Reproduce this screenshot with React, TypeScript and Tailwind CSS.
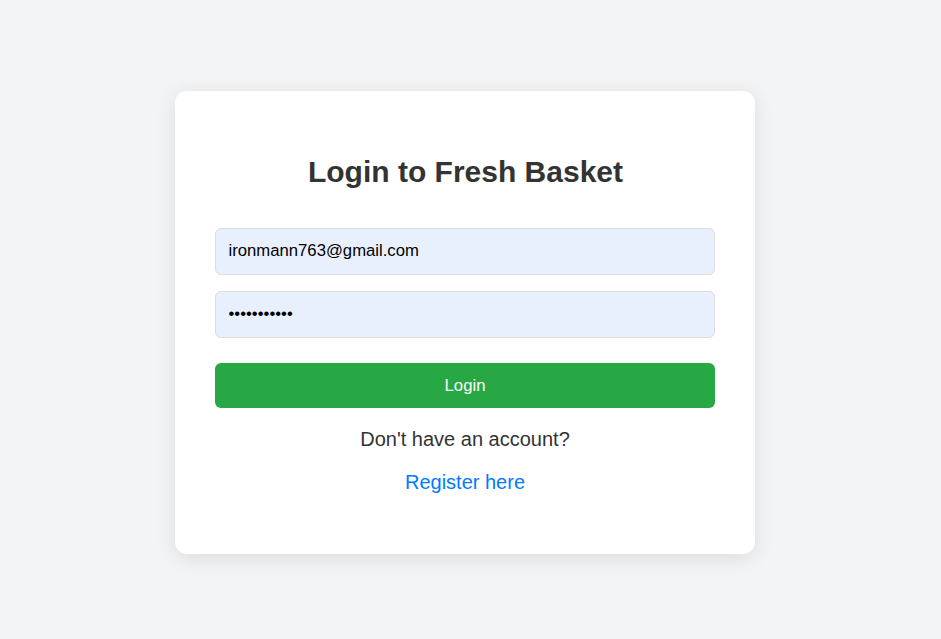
export default function App() {
  return (
    <div className="flex h-[639px] w-full justify-center bg-[#f2f4f6] pr-[11px] pt-[91px] font-['Liberation_Sans',Arial,sans-serif] text-[#333]">
      <main className="flex h-[463px] w-[580px] flex-col rounded-xl bg-white px-10 pt-[63px] text-center shadow-[0_4px_20px_rgba(0,0,0,0.1)]">
        <h1 className="pl-px text-[30px] leading-9 font-bold">Login to Fresh Basket</h1>
        <form className="mt-[38px] flex flex-col" onSubmit={(e) => e.preventDefault()}>
          <input
            type="text"
            aria-label="Email"
            defaultValue="ironmann763@gmail.com"
            className="h-[47px] rounded-md border border-[#ddd] bg-[#e8f0fe] px-[12.5px] pb-[2px] text-[16.7px] text-black"
          />
          <input
            type="password"
            aria-label="Password"
            defaultValue="abcdefghijk"
            className="mt-4 h-[47px] rounded-md border border-[#ddd] bg-[#e8f0fe] px-[12.5px] pb-[2px] text-[16.7px] text-black"
          />
          <button className="mt-[25px] h-[45px] rounded-md bg-[#28a745] text-[16.7px] text-white">Login</button>
        </form>
        <p className="mt-[19px] text-xl leading-6">Don&apos;t have an account?</p>
        <a href="#" className="mt-[19px] self-center text-xl leading-6 text-[#007bff]">Register here</a>
      </main>
    </div>
  );
}
